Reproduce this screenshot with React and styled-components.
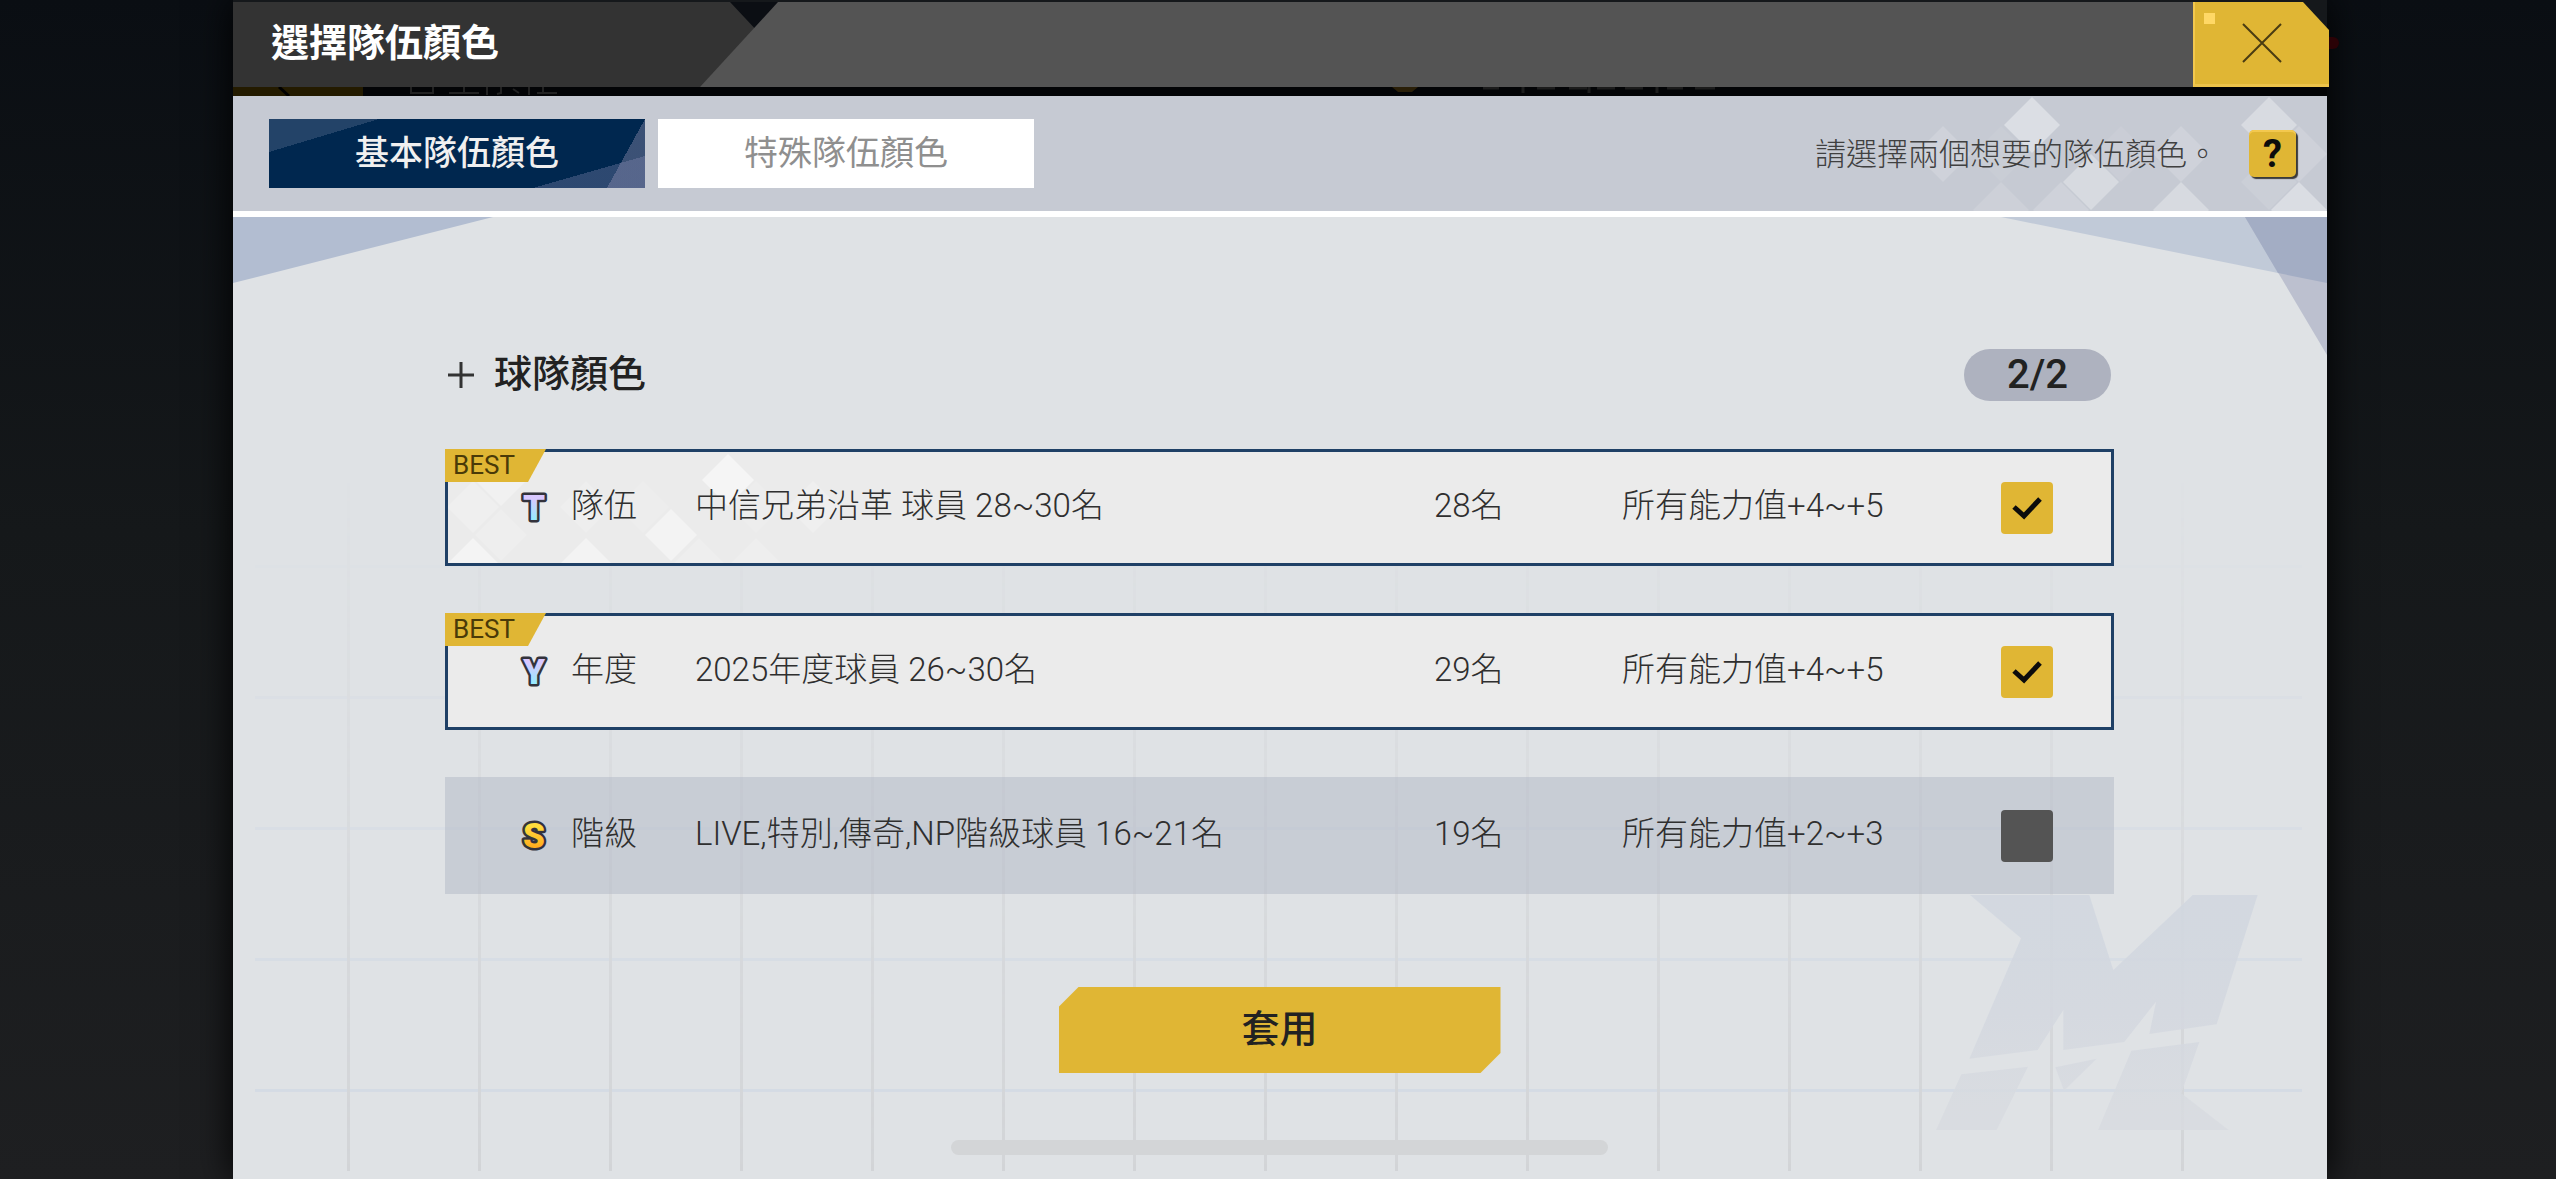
import React, { useState } from 'react';
import styled, { createGlobalStyle, css } from 'styled-components';

const TEAM_COLORS = [
  { id: 'team', mark: 'T', type: '隊伍', name: '中信兄弟沿革 球員 28~30名', count: '28名', effect: '所有能力值+4~+5', best: true, pattern: true },
  { id: 'year', mark: 'Y', type: '年度', name: '2025年度球員 26~30名', count: '29名', effect: '所有能力值+4~+5', best: true },
  { id: 'grade', mark: 'S', type: '階級', name: 'LIVE,特別,傳奇,NP階級球員 16~21名', count: '19名', effect: '所有能力值+2~+3' },
];

const TABS = ['基本隊伍顏色', '特殊隊伍顏色'];
const MAX = 2;

// [x, y, opacity] of each diamond centre
const TOOLBAR_DIAMONDS = [
  [30, 58, 0.16], [88, 58, 0.06], [119, 29, 0.38], [208, 58, 0.07], [268, 58, 0.16],
  [356, 29, 0.32], [386, 58, 0.14], [178, 86, 0.3], [356, 86, 0.1],
  [88, 114, 0.12], [148, 114, 0.16], [268, 114, 0.3], [386, 114, 0.36],
];
const ROW_DIAMONDS = [
  [25, 55, 0.2], [53, 28, 0.3], [53, 83, 0.16], [25, 112, 0.45], [138, 55, 0.16],
  [138, 112, 0.4], [195, 55, 0.1], [223, 83, 0.4], [280, 28, 0.5], [251, 112, 0.16],
  [308, 55, 0.1], [308, 112, 0.16], [365, 55, 0.2],
];

function Diamonds({ points, r }) {
  return points.map(([x, y, o]) => (
    <path key={`${x}-${y}`} fill="#fff" fillOpacity={o} d={`M${x} ${y - r}l${r} ${r}l${-r} ${r}l${-r} ${-r}z`} />
  ));
}

function MarkIcon({ mark }) {
  const gold = mark === 'S';
  return (
    <MarkSvg width="34" height="38" viewBox="0 0 34 38" aria-hidden="true">
      <defs>
        <linearGradient id={`mark-${mark}`} x1="0" y1="0" x2="0" y2="1">
          <stop offset="0.25" stopColor={gold ? '#ffdc3c' : '#d9c8ff'} />
          <stop offset="0.8" stopColor={gold ? '#ffa91c' : '#93ecff'} />
        </linearGradient>
      </defs>
      <MarkText x="17" y="31" fill={`url(#mark-${mark})`}>{mark}</MarkText>
    </MarkSvg>
  );
}

function ColorRow({ item, checked, onToggle }) {
  return (
    <Row $active={checked}>
      {item.pattern && (
        <RowPattern width="400" height="111" aria-hidden="true">
          <Diamonds points={ROW_DIAMONDS} r={26} />
        </RowPattern>
      )}
      {item.best && <Best>BEST</Best>}
      <MarkIcon mark={item.mark} />
      <Cell>{item.type}</Cell>
      <Cell as="label" htmlFor={item.id}>{item.name}</Cell>
      <Cell>{item.count}</Cell>
      <Cell>{item.effect}</Cell>
      <CheckWrap>
        <Check id={item.id} type="checkbox" checked={checked} onChange={onToggle} />
        {checked && (
          <CheckMark width="52" height="52" viewBox="0 0 52 52" aria-hidden="true">
            <path d="M13 25l10 9L39 17" fill="none" stroke="#0c0c0c" strokeWidth="5" />
          </CheckMark>
        )}
      </CheckWrap>
    </Row>
  );
}

export default function App() {
  const [tab, setTab] = useState(0);
  const [selected, setSelected] = useState(['team', 'year']);

  const toggle = (id) => {
    if (selected.includes(id)) setSelected(selected.filter((v) => v !== id));
    else if (selected.length < MAX) setSelected([...selected, id]);
  };

  return (
    <>
      <GlobalStyle />
      <Page>
        <Dialog>
          <Header>
            <TitleArea>
              <Title>選擇隊伍顏色</Title>
            </TitleArea>
            <CloseButton type="button" aria-label="關閉">
              <CloseDot />
              <svg width="40" height="40" viewBox="0 0 40 40" aria-hidden="true">
                <path d="M1 1l38 38M39 1L1 39" stroke="#4a3c12" strokeWidth="2" />
              </svg>
            </CloseButton>
            <AlertDot />
          </Header>
          <Underlay>
            <svg width="1600" height="9" viewBox="0 0 1600 9" aria-hidden="true">
              <path d="M0 0h130v9H0z" fill="#241b00" />
              <path d="M46 0l10 9" stroke="#000" strokeWidth="3" />
              <path
                d="M178 0v7M200 0v7M178 6h22M216 6h30M231 0v6M254 0v8M268 0v6l-4 1M280 2l6 4M296 0v8M304 6h20M310 0v6"
                fill="none"
                stroke="#222"
                strokeWidth="2"
              />
              <path d="M1159 0h26l-6 5h-14z" fill="#2a1f08" />
              <path d="M1250 1h16M1290 0v6M1304 1h18M1336 1h18M1356 0v6M1364 1h18M1392 1h18M1424 0v6M1434 1h16M1462 1h20" stroke="#1c1c1c" strokeWidth="3" />
            </svg>
          </Underlay>
          <Toolbar>
            <ToolbarPattern width="414" height="115" aria-hidden="true">
              <Diamonds points={TOOLBAR_DIAMONDS} r={28} />
            </ToolbarPattern>
            <Tabs role="tablist">
              {TABS.map((label, i) => (
                <Tab key={label} type="button" role="tab" aria-selected={tab === i} $active={tab === i} onClick={() => setTab(i)}>
                  {label}
                </Tab>
              ))}
            </Tabs>
            <Hint>請選擇兩個想要的隊伍顏色。</Hint>
            <HelpButton type="button">?</HelpButton>
          </Toolbar>
          <Body>
            <GridLines />
            <CornerLeft width="260" height="66" viewBox="0 0 260 66" aria-hidden="true">
              <path d="M0 0h260L0 66z" fill="#b2bdd1" />
            </CornerLeft>
            <CornerRight width="326" height="138" viewBox="0 0 326 138" aria-hidden="true">
              <path d="M0 0h326v66z" fill="#c1cad8" />
              <path d="M244 0h82v138z" fill="#bcc0cf" />
              <path d="M244 0h82v66l-49-10z" fill="#a3adc4" />
            </CornerRight>
            <Logo width="322" height="235" viewBox="230 105 966 705" aria-hidden="true">
              <defs>
                <linearGradient id="logo-fade" gradientUnits="userSpaceOnUse" x1="0" y1="105" x2="0" y2="810">
                  <stop offset="0" stopColor="#d1d7e0" />
                  <stop offset="0.5" stopColor="#d4d8e0" />
                  <stop offset="1" stopColor="#d9dce1" />
                </linearGradient>
              </defs>
              <path d="M332 105H690L762 330L1000 105H1195L1072 493L870 522L890 425L795 546L612 570V450L535 570L330 596L485 235z" />
              <path d="M306 643L506 620L412 810H230zM588 622L712 596L614 692zM816 572L1020 546L966 700L1108 810H716z" />
            </Logo>
            <Section>
              <SectionHead>
                <svg width="26" height="26" viewBox="0 0 26 26" aria-hidden="true">
                  <path d="M13 0v26M0 13h26" stroke="#333" strokeWidth="3" />
                </svg>
                <SectionTitle>球隊顏色</SectionTitle>
                <Counter>{selected.length}/{MAX}</Counter>
              </SectionHead>
              <List>
                {TEAM_COLORS.map((item) => (
                  <ColorRow key={item.id} item={item} checked={selected.includes(item.id)} onToggle={() => toggle(item.id)} />
                ))}
              </List>
            </Section>
            <ApplyButton type="button">套用</ApplyButton>
            <HomeBar />
          </Body>
        </Dialog>
      </Page>
    </>
  );
}

const GlobalStyle = createGlobalStyle`
  * {
    box-sizing: border-box;
  }
  body {
    margin: 0;
    background: #0a0e13;
    color: #2b2b2b;
    font-family: Roboto, 'Noto Sans CJK TC', sans-serif;
  }
  button, input {
    margin: 0;
    padding: 0;
    border: 0;
    color: inherit;
    font-family: inherit;
  }
`;

const Page = styled.div`
  display: flex;
  min-height: 100vh;
  padding: 0 229px 0 233px;
  background: linear-gradient(#0a0e13, #15181a 45%, #1e1f21);
`;

const Dialog = styled.main`
  display: flex;
  flex: 1;
  flex-direction: column;
  min-width: 0;
  box-shadow: 0 0 36px #000;
`;

const Header = styled.header`
  position: relative;
  display: flex;
  height: 87px;
  padding-top: 2px;
  background: #15181b;
`;

const TitleArea = styled.div`
  position: relative;
  z-index: 0;
  flex: 1;
  display: flex;
  align-items: center;
  padding-left: 38px;
  background: #0b0e13;
  &::before,
  &::after {
    content: '';
    position: absolute;
    inset: 0;
    z-index: -1;
  }
  &::before {
    background: #333;
    clip-path: polygon(0 0, 497px 0, 541px 47px, 541px 100%, 0 100%);
  }
  &::after {
    background: #545454;
    clip-path: polygon(545px 0, 100% 0, 100% 100%, 467px 100%);
  }
`;

const Title = styled.h1`
  margin: 0;
  padding-bottom: 4px;
  color: #fff;
  font-size: 38px;
  font-weight: 700;
  line-height: 48px;
`;

const CloseButton = styled.button`
  position: relative;
  display: flex;
  align-items: center;
  justify-content: center;
  width: 136px;
  margin-right: -2px;
  border-left: 2px solid #f3c84e;
  border-bottom: 3px solid #edc34a;
  background: #e0b634;
  clip-path: polygon(0 0, 110px 0, 100% 28px, 100% 100%, 0 100%);
`;

const CloseDot = styled.span`
  position: absolute;
  top: 11px;
  left: 9px;
  width: 11px;
  height: 11px;
  background: #ffd866;
`;

const AlertDot = styled.span`
  position: absolute;
  top: 37px;
  right: -12px;
  width: 10px;
  height: 12px;
  border-radius: 0 6px 6px 0;
  background: #2a0206;
`;

// the strip of the dimmed screen left visible between header and toolbar
const Underlay = styled.div`
  display: flex;
  height: 9px;
  overflow: hidden;
  background: #030406;
`;

const Toolbar = styled.div`
  position: relative;
  display: flex;
  align-items: center;
  height: 121px;
  padding: 0 31px 0 36px;
  border-bottom: 6px solid #fff;
  background: #c6cad3;
`;

const ToolbarPattern = styled.svg`
  position: absolute;
  top: 0;
  right: 0;
`;

const Tabs = styled.div`
  display: flex;
  gap: 13px;
  margin-right: auto;
`;

const Tab = styled.button`
  width: 376px;
  height: 69px;
  padding-bottom: 2px;
  background: #fff;
  color: #8f8f8f;
  font-size: 34px;
  line-height: 48px;

  ${({ $active }) => $active && css`
    background:
      linear-gradient(to bottom right, #234368 50%, transparent 50%) 0 0 / 110px 33px no-repeat,
      linear-gradient(to bottom right, transparent 50%, rgba(150, 150, 190, 0.3) 50%) 100% 100% / 112px 32px no-repeat,
      linear-gradient(to bottom right, transparent 50%, rgba(170, 160, 190, 0.35) 50%) 100% 0 / 38px 69px no-repeat,
      #00274f;
    color: #f0f0f0;
    font-weight: 500;
  `}
`;

const Hint = styled.p`
  position: relative;
  margin: 0 31px 0 0;
  padding-top: 2px;
  color: #404040;
  font-size: 31px;
  font-weight: 300;
  line-height: 48px;
`;

const HelpButton = styled.button`
  position: relative;
  width: 47px;
  height: 47px;
  border-radius: 5px;
  background: #e0b634;
  box-shadow: inset 0 2px #f3c84e, 2px 2px 1px #3a3a3a;
  color: #0c0c0c;
  font-size: 38px;
  font-weight: 700;
  line-height: 46px;
`;

const Body = styled.div`
  position: relative;
  display: flex;
  flex: 1;
  flex-direction: column;
  align-items: center;
  padding: 132px 213px 24px 212px;
  background: #dfe2e5;
`;

const GridLines = styled.div`
  position: absolute;
  inset: 85px 25px 8px 22px;
  background:
    repeating-linear-gradient(to right, transparent 0 92px, #d2d4d7 92px 95px, transparent 95px 131px),
    repeating-linear-gradient(to bottom, transparent 0 1px, #d3dae4 1px 4px, transparent 4px 131px);
  mask-image: linear-gradient(transparent 20%, rgba(0, 0, 0, 0.35) 50%, #000);
`;

const CornerLeft = styled.svg`
  position: absolute;
  top: 0;
  left: 0;
`;

const CornerRight = styled.svg`
  position: absolute;
  top: 0;
  right: 0;
`;

const Logo = styled.svg`
  position: absolute;
  right: 69px;
  bottom: 49px;
  fill: url(#logo-fade);
  opacity: 0.85;
`;

const Section = styled.section`
  position: relative;
  width: 100%;
`;

const SectionHead = styled.div`
  display: flex;
  align-items: center;
  height: 52px;
  padding: 0 3px 0 3px;
`;

const SectionTitle = styled.h2`
  margin: 0 auto 0 20px;
  padding-bottom: 2px;
  color: #222;
  font-size: 38px;
  font-weight: 500;
  line-height: 48px;
`;

const Counter = styled.span`
  width: 147px;
  border-radius: 26px;
  background: #aeb2bf;
  color: #222;
  font-size: 40px;
  font-weight: 500;
  line-height: 52px;
  text-align: center;
`;

const List = styled.ul`
  display: flex;
  flex-direction: column;
  gap: 47px;
  margin: 48px 0 0;
  padding: 0;
  list-style: none;
`;

const Row = styled.li`
  position: relative;
  display: grid;
  grid-template-columns: 54px 124px 1fr 188px 379px 52px;
  align-items: center;
  height: 117px;
  padding: 0 58px 0 69px;
  border: 3px solid ${({ $active }) => ($active ? '#1f4066' : 'transparent')};
  background: ${({ $active }) => ($active ? '#ebebeb' : 'rgba(176, 182, 196, 0.48)')};
`;

const RowPattern = styled.svg`
  position: absolute;
  top: 0;
  left: 0;
`;

const Best = styled.span`
  position: absolute;
  top: -3px;
  left: -3px;
  width: 101px;
  padding-left: 8px;
  background: #e0b634;
  clip-path: polygon(0 0, 100% 0, 83px 100%, 0 100%);
  color: #4a3a08;
  font-size: 26px;
  line-height: 33px;
`;

const MarkSvg = styled.svg`
  position: relative;
  overflow: visible;
`;

const MarkText = styled.text`
  font-size: 35px;
  font-weight: 900;
  text-anchor: middle;
  stroke: #33333c;
  stroke-width: 5px;
  stroke-linejoin: round;
  paint-order: stroke;
`;

const Cell = styled.span`
  position: relative;
  padding-bottom: 4px;
  color: #2f2f2f;
  font-size: 33px;
  font-weight: 300;
  line-height: 48px;
  white-space: nowrap;
`;

const CheckWrap = styled.span`
  display: grid;
  > * {
    grid-area: 1 / 1;
  }
`;

const Check = styled.input`
  appearance: none;
  width: 52px;
  height: 52px;
  border-radius: 4px;
  background: #545454;
  &:checked {
    background: #e0b634;
  }
`;

const CheckMark = styled.svg`
  pointer-events: none;
`;

const ApplyButton = styled.button`
  position: relative;
  width: 442px;
  height: 86px;
  margin-top: 93px;
  padding-bottom: 2px;
  background: #e0b634;
  clip-path: polygon(20px 0, 100% 0, 100% 66px, 422px 100%, 0 100%, 0 20px);
  color: #222;
  font-size: 38px;
  font-weight: 500;
  line-height: 48px;
`;

const HomeBar = styled.div`
  position: relative;
  width: 657px;
  height: 15px;
  margin-top: auto;
  border-radius: 8px;
  background: #d3d5d7;
`;
